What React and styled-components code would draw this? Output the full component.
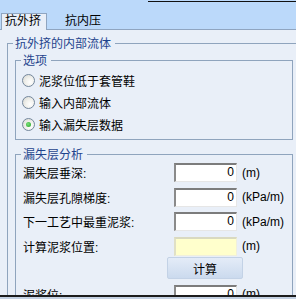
import React from "react";
import styled, { createGlobalStyle } from "styled-components";

const Global = createGlobalStyle`
  html, body { margin: 0; padding: 0; background: #e9eff8; }
  * { box-sizing: border-box; }
`;

const Root = styled.div`
  width: 296px;
  height: 299px;
  display: flex;
  flex-direction: column;
  overflow: hidden;
  background: #e9eff8;
  font-family: "Liberation Sans", "Noto Sans CJK SC", sans-serif;
  font-size: 12px;
  color: #000;
`;

const TabStrip = styled.div`
  position: relative;
  height: 30px;
  flex: none;
  display: flex;
  align-items: flex-end;
  padding-left: 1px;
  background: #bbd9fa;
  border-bottom: 1px solid #8fa5c0;
  &::before {
    content: "";
    position: absolute;
    left: 148px;
    right: 0;
    top: 1px;
    height: 1px;
    background: #111;
  }
`;

const Tab = styled.div`
  height: 17px;
  margin-bottom: -1px;
  line-height: 15px;
  padding: 0 5px 0 3px;
  border: 1px solid ${(p) => (p.$active ? "#8fa5c0" : "transparent")};
  border-bottom: none;
  background: ${(p) => (p.$active ? "#e9eff8" : "transparent")};
  margin-left: ${(p) => (p.$active ? "0" : "14px")};
  color: #000;
  white-space: nowrap;
`;

const Page = styled.div`
  flex: 1;
  min-height: 0;
  overflow: hidden;
  padding: 13px 0 0 7px;
`;

const Group = styled.div`
  width: ${(p) => p.$width}px;
  border: 1px solid #8fa4bd;
  padding: ${(p) => p.$pad};
  margin-top: ${(p) => p.$mt || 0}px;
`;

const Caption = styled.div`
  width: fit-content;
  margin: -7px 0 0 ${(p) => p.$ml}px;
  padding: 0 4px 0 2px;
  line-height: 14px;
  height: 14px;
  background: #e9eff8;
  color: #1f448d;
  white-space: nowrap;
`;

const RadioList = styled.div`
  margin-top: 1px;
  display: flex;
  flex-direction: column;
`;

const RadioRow = styled.label`
  height: 22px;
  display: flex;
  align-items: center;
  gap: 4px;
  white-space: nowrap;
`;

const Circle = styled.span`
  width: 13px;
  height: 13px;
  border-radius: 50%;
  border: 1px solid #74879c;
  background: radial-gradient(circle at 65% 65%, #ffffff 0%, #f2f2ee 40%, #d6d6cf 100%);
  display: flex;
  align-items: center;
  justify-content: center;
  flex: none;
  &::after {
    content: "";
    width: 5px;
    height: 5px;
    border-radius: 50%;
    background: radial-gradient(circle at 40% 40%, #7be07b, #21a121);
    display: ${(p) => (p.$checked ? "block" : "none")};
  }
`;

const Fields = styled.div`
  display: flex;
  flex-direction: column;
  gap: 5.5px;
  margin-top: 1px;
`;

const FieldRow = styled.div`
  height: 19px;
  display: flex;
  align-items: center;
  white-space: nowrap;
`;

const Label = styled.span`
  width: 151px;
  flex: none;
`;

const Input = styled.div`
  width: 63px;
  height: 19px;
  flex: none;
  background: ${(p) => (p.$yellow ? "#ffffcc" : "#ffffff")};
  border-top: 2px solid ${(p) => (p.$yellow ? "#d9d9c0" : "#7c7c7c")};
  border-left: 2px solid ${(p) => (p.$yellow ? "#e0e0c6" : "#8a8a8a")};
  border-right: 1px solid ${(p) => (p.$yellow ? "#f0f0dc" : "#e6e6e6")};
  border-bottom: 1px solid ${(p) => (p.$yellow ? "#f0f0dc" : "#e6e6e6")};
  text-align: right;
  padding-right: 2px;
  line-height: 15px;
`;

const Unit = styled.span`
  margin-left: 5px;
`;

const Button = styled.div`
  width: 76px;
  height: 22px;
  margin: -4px 0 0 144px;
  border: 1px solid #c3d2e6;
  border-radius: 2px;
  background: linear-gradient(#e4ecf8, #cbdaee);
  display: flex;
  align-items: center;
  justify-content: center;
  flex: none;
`;

const BottomBar = styled.div`
  flex: none;
  height: 4px;
  border-top: 2px solid #1c1c1c;
  background: #c3d0e2;
`;

const fields = [
  { label: "漏失层垂深:", value: "0", unit: "(m)" },
  { label: "漏失层孔隙梯度:", value: "0", unit: "(kPa/m)" },
  { label: "下一工艺中最重泥浆:", value: "0", unit: "(kPa/m)" },
  { label: "计算泥浆位置:", value: "", unit: "(m)", yellow: true },
];

export default function App() {
  return (
    <Root>
      <Global />
      <TabStrip>
        <Tab $active>抗外挤</Tab>
        <Tab>抗内压</Tab>
      </TabStrip>
      <Page>
        <Group $width={310} $pad="0 0 0 7px">
          <Caption $ml={-2}>抗外挤的内部流体</Caption>
          <Group $width={278} $pad="0 0 4px 6px" $mt={9}>
            <Caption $ml={-1}>选项</Caption>
            <RadioList>
              <RadioRow><Circle />泥浆位低于套管鞋</RadioRow>
              <RadioRow><Circle />输入内部流体</RadioRow>
              <RadioRow><Circle $checked />输入漏失层数据</RadioRow>
            </RadioList>
          </Group>
          <Group $width={278} $pad="0 0 6px 7px" $mt={14}>
            <Caption $ml={-2}>漏失层分析</Caption>
            <Fields>
              {fields.map((f) => (
                <FieldRow key={f.label}>
                  <Label>{f.label}</Label>
                  <Input $yellow={f.yellow}>{f.value}</Input>
                  <Unit>{f.unit}</Unit>
                </FieldRow>
              ))}
              <Button>计算</Button>
              <FieldRow>
                <Label>泥浆位:</Label>
                <Input>0</Input>
                <Unit>(m)</Unit>
              </FieldRow>
            </Fields>
          </Group>
        </Group>
      </Page>
      <BottomBar />
    </Root>
  );
}
